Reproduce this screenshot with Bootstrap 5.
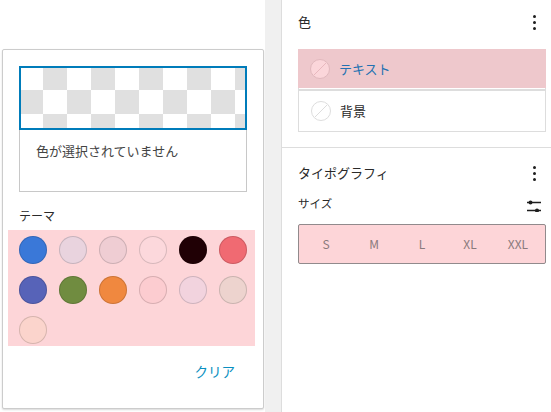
<!DOCTYPE html>
<html lang="ja"><head><meta charset="utf-8">
<link href="https://cdn.jsdelivr.net/npm/bootstrap@5.3.0/dist/css/bootstrap.min.css" rel="stylesheet">
<style>
html,body{height:100%;margin:0;overflow:hidden}
body{width:551px;height:412px;background:#fff;font-family:"Noto Sans CJK JP","Liberation Sans",sans-serif;font-size:13px;color:#2a2a2a}
.canvas-pane{width:265px;height:412px;padding:49px 0 0 2px;background:#fff}
.gutter-pane{width:17px;height:412px;background:#f0f0f0;border-right:1px solid #ddd}
.side-pane{width:269px;height:412px}
.pop-card{width:262px;height:360px;border:1px solid #ccc;border-radius:2px;box-shadow:0 1px 2px rgba(0,0,0,.15);padding:16px 16px 0 16px}
.color-box{width:228px;height:126px;border:1px solid #c8c8c8}
.checker{height:64px;border:2px solid #007cba;margin:-1px;width:228px;background-color:#fff;
background-image:linear-gradient(45deg,#e0e0e0 25%,transparent 25%,transparent 75%,#e0e0e0 75%),linear-gradient(45deg,#e0e0e0 25%,transparent 25%,transparent 75%,#e0e0e0 75%);background-size:48px 48px;background-position:-2px -2px,22px 22px}
.none-text{padding:12px 16px;font-size:13px;line-height:20px;color:#444}
.theme-label{margin-top:15px;font-size:12px;line-height:18px}
.swatch-panel{width:247px;margin:5px 0 0 -11px;background:#fdd5d8;padding:6px 11px;display:grid;grid-template-columns:repeat(6,28px);column-gap:12px;row-gap:12px;height:116px}
.dot{width:28px;height:28px;border-radius:50%;box-shadow:inset 0 0 0 1px rgba(0,0,0,.15)}
.clear-link{font-size:13.5px;color:#0a8fc0;text-align:right;padding:15px 12px 0 0;line-height:20px}
.sec-title{font-size:13px;line-height:20px}
.kebab{width:3px;display:flex;flex-direction:column;gap:3px}
.kebab i{display:block;width:3px;height:3px;background:#1e1e1e;border-radius:50%}
.sec-one{height:148px;border-bottom:1px solid #ddd;padding:12px 15px 0 16px}
.sec-two{padding:15px 15px 0 16px}
.color-list{width:248px;margin-top:17px;border:1px solid #ddd;border-top:0}
.item-on{height:39px;background:#eec8cc;color:#2271b1;display:flex;align-items:center;gap:9px;padding-left:12px;margin:0 -1px}
.item-off{height:42px;margin-top:1px;border-top:2px solid #ddd;display:flex;align-items:center;gap:9px;padding-left:12px}
.size-label{font-size:11.5px;line-height:16px}
.mt-size{margin-top:12px}
.slider-ico{margin:5px -5px 0 0}
.size-bar{width:248px;height:40px;margin-top:12px;background:#fdd5d8;border:1px solid #918a8c;border-radius:2px;display:grid;grid-template-columns:repeat(5,48px);color:#8a7a7c;font-size:12px;padding-left:3px}
</style></head><body>
<div class="d-flex">
 <div class="canvas-pane">
  <div class="pop-card bg-white">
   <div class="color-box">
    <div class="checker"></div>
    <div class="none-text">色が選択されていません</div>
   </div>
   <div class="theme-label">テーマ</div>
   <div class="swatch-panel">
    <div class="dot" style="background:#3a78d8"></div><div class="dot" style="background:#e9d3de"></div><div class="dot" style="background:#efcdd3"></div><div class="dot" style="background:#fcd8dc"></div><div class="dot" style="background:#200005"></div><div class="dot" style="background:#f06a72"></div>
    <div class="dot" style="background:#5763b8"></div><div class="dot" style="background:#708c40"></div><div class="dot" style="background:#f0883f"></div><div class="dot" style="background:#fcccd0"></div><div class="dot" style="background:#f2d3de"></div><div class="dot" style="background:#edd3ce"></div>
    <div class="dot" style="background:#fbd4cc"></div>
   </div>
   <div class="clear-link">クリア</div>
  </div>
 </div>
 <div class="gutter-pane"></div>
 <div class="side-pane">
  <div class="sec-one">
   <div class="d-flex justify-content-between align-items-center"><span class="sec-title">色</span><span class="kebab"><i></i><i></i><i></i></span></div>
   <div class="color-list">
    <div class="item-on"><svg width="20" height="20" viewBox="0 0 20 20"><circle cx="10" cy="10" r="9.5" fill="#fbd6da" stroke="#e0b8bd"/><path d="M4 16 16 4" stroke="#e8b8be"/></svg><span>テキスト</span></div>
    <div class="item-off"><svg width="20" height="20" viewBox="0 0 20 20"><circle cx="10" cy="10" r="9.5" fill="#fff" stroke="#ddd"/><path d="M4 16 16 4" stroke="#ddd"/></svg><span>背景</span></div>
   </div>
  </div>
  <div class="sec-two">
   <div class="d-flex justify-content-between align-items-center"><span class="sec-title">タイポグラフィ</span><span class="kebab"><i></i><i></i><i></i></span></div>
   <div class="d-flex justify-content-between align-items-start mt-size"><span class="size-label">サイズ</span><svg class="slider-ico" width="14" height="12" viewBox="0 0 14 12"><path d="M0 2.5h14M0 10.5h14" stroke="#1e1e1e" stroke-width="1.3"/><circle cx="3.5" cy="2.5" r="2" fill="#1e1e1e"/><circle cx="10" cy="10.5" r="2" fill="#1e1e1e"/></svg></div>
   <div class="size-bar"><span class="d-flex align-items-center justify-content-center">S</span><span class="d-flex align-items-center justify-content-center">M</span><span class="d-flex align-items-center justify-content-center">L</span><span class="d-flex align-items-center justify-content-center">XL</span><span class="d-flex align-items-center justify-content-center">XXL</span></div>
  </div>
 </div>
</div>
</body></html>
